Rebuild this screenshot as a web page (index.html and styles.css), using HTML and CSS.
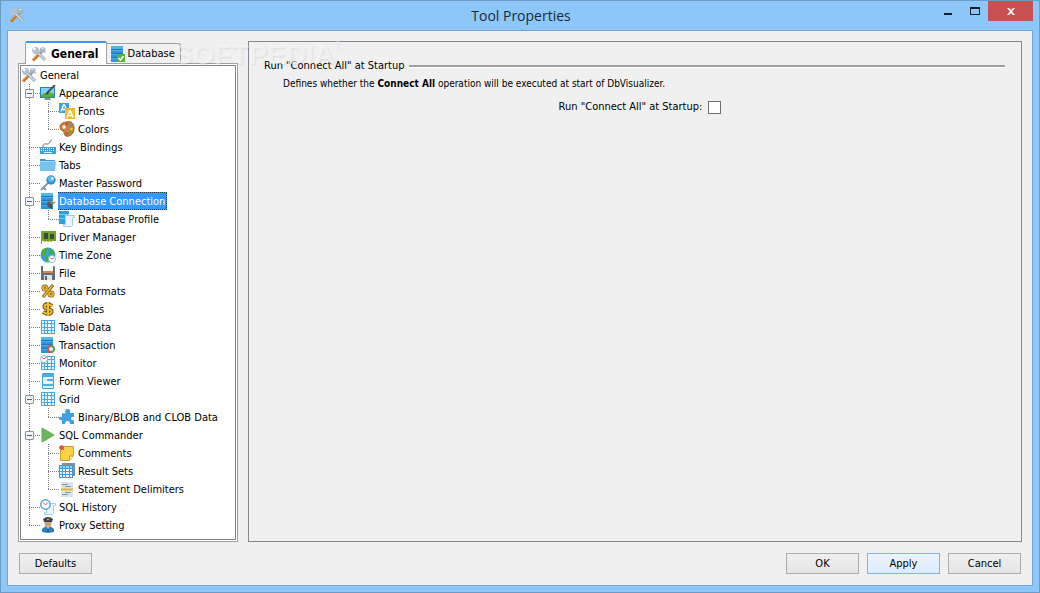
FILE: index.html
```html
<!DOCTYPE html>
<html lang="en">
<head>
    <meta charset="UTF-8">
    <meta name="viewport" content="width=device-width, initial-scale=1.0">
    <title>Tool Properties</title>
    <link rel="stylesheet" href="styles.css">
</head>
<body>
    <!-- Shared icons -->
    <svg class="icon-defs" aria-hidden="true">
        <symbol id="tools" viewBox="0 0 16 16">
            <path d="M2 14.500 8 8" stroke="#c9731c" stroke-width="3"/>
            <path d="M2 13.500 7 8" stroke="#f0a952" stroke-width="1"/>
            <path d="M7.500 9 12 4.500M5 5l9 9" stroke="#8f9dac" stroke-width="3"/>
            <path d="M5 5l9 9" stroke="#d3dce6" stroke-width="1.500"/>
            <path d="M1 2 3.500 4.500 5 3 3 1h3l2 2v3L6 8H3L1 5z" fill="#b4c0cc"/>
            <path d="M9 2l4-1 2 2-1 1 1 2-1 1-2-2-2 2-2-2 1-1z" fill="#a8b5c2"/>
            <path d="M10 3l3-1" stroke="#e1e8ee"/>
        </symbol>
        <symbol id="db" viewBox="0 0 16 16">
            <path d="M1 0h12v16H1z" fill="#2b95db"/>
            <path d="M1 0h12v3H1z" fill="#4db6f0"/>
            <path d="M1 3.500h12M1 7.500h12M1 11.500h12" stroke="#1b78b8"/>
            <path d="M1 4.500h12M1 8.500h12M1 12.500h12" stroke="#4db0ea"/>
        </symbol>
        <symbol id="table" viewBox="0 0 16 16">
            <path d="M1 1h14v14H1z" fill="#e9f6fe"/>
            <path d="M1.500 1v14M4.500 1v14M7.500 1v14M11.500 1v14M14.500 1v14M1 1.500h14M1 4.500h14M1 8.500h14M1 11.500h14M1 14.500h14" stroke="#4aa9e3"/>
        </symbol>
        <symbol id="page" viewBox="0 0 16 16">
            <path d="M6.500 4.500h9v2h-2v8l-1 1h-8v-2h2z" fill="#eaf5fc" stroke="#a6cde6"/>
        </symbol>
    </svg>

    <div class="window">
        <header class="titlebar">
            <svg class="icon title-icon"><use href="#tools"/></svg>
            <h1 class="title">Tool Properties</h1>
            <div class="window-controls">
                <button class="control" aria-label="Minimize"><svg width="8" height="11"><path d="M0 9h8v2H0z" fill="#1e1e1e"/></svg></button>
                <button class="control" aria-label="Maximize"><svg width="10" height="8"><path d="M0 0h10v8H0zM1 2v5h8V2z" fill="#1e1e1e" fill-rule="evenodd"/></svg></button>
                <button class="control close" aria-label="Close"><svg width="8" height="7"><path d="M0 0h2l2 2 2-2h2L5 3.500 8 7H6L4 5 2 7H0l3-3.500z" fill="#fff"/></svg></button>
            </div>
        </header>

        <div class="client">
            <main class="columns">
                <section class="sidebar">
                    <div class="tabs" role="tablist">
                        <button class="tab active" role="tab" aria-selected="true"><svg class="icon"><use href="#tools"/></svg>General</button>
                        <button class="tab" role="tab" aria-selected="false">
                            <svg class="icon" viewBox="0 0 16 16"><use href="#db"/><path d="M7 8h8v8H7z" fill="#55b531"/><path d="M8.500 12l2 2 3-4" stroke="#fff" stroke-width="1.500" fill="none"/></svg>Database
                        </button>
                    </div>
                    <nav class="tree-frame">
                        <div class="tree">
                            <a class="row" href="#"><svg class="icon"><use href="#tools"/></svg><span class="label">General</span></a>
                            <ul class="branch">
                                <li>
                                    <div class="parent">
                                        <button class="toggle" aria-expanded="true" aria-label="Collapse Appearance"></button>
                                        <a class="row" href="#">
                                            <svg class="icon" viewBox="0 0 16 16"><path d="M0 2h15v11H0z" fill="#2581be"/><path d="M1 3h13v9H1z" fill="#7fd0f5"/><path d="M1 10q6-5 13-1v3H1z" fill="#52b43a"/><path d="M5 13h5l1 2H4z" fill="#8a9199"/><path d="M15 0 8 7" stroke="#4f5358" stroke-width="2"/><path d="M8 6 5 10l3-1 1-2z" fill="#30343a"/></svg>
                                            <span class="label">Appearance</span>
                                        </a>
                                    </div>
                                    <ul class="branch">
                                        <li><a class="row" href="#">
                                            <svg class="icon" viewBox="0 0 16 16"><path d="M0 0h10v10H0z" fill="#36a5e6"/><path d="M2 8.500 4.500 2h1L8 8.500M3 6.500h4" stroke="#fff" stroke-width="1.300" fill="none"/><path d="M6 5h10v11H6z" fill="#f3bd20"/><path d="M8 14.500 10.500 8h1l2.500 6.500M9 12.500h4" stroke="#fff" stroke-width="1.500" fill="none"/></svg>
                                            <span class="label">Fonts</span></a></li>
                                        <li><a class="row" href="#">
                                            <svg class="icon" viewBox="0 0 16 16"><path d="M8 1c4-1 7 1 7 6 0 6-4 9-8 8-3-1-1-4-3-5C1 9 1 7 1 5c1-3 4-4 7-4z" fill="#c98141" stroke="#9d5b25"/><circle cx="5" cy="6" r="1.700" fill="#fff"/><circle cx="8" cy="3" r="1.300" fill="#e94536"/><circle cx="12" cy="4" r="1.300" fill="#3b9de0"/><circle cx="12.500" cy="8" r="1.300" fill="#f4cf2b"/><circle cx="11" cy="11" r="1.300" fill="#50b444"/><circle cx="8" cy="12.500" r="1.300" fill="#d9432f"/></svg>
                                            <span class="label">Colors</span></a></li>
                                    </ul>
                                </li>
                                <li><a class="row" href="#">
                                    <svg class="icon" viewBox="0 0 16 16"><path d="M3 8q0-4 3-3t4-2q0-2 2-2" fill="none" stroke="#72787e"/><path d="M0 8h16v7H0z" fill="#3b9fdc"/><path d="M1 9.500h14M1 11.500h14" stroke="#fff" stroke-dasharray="1 1"/><path d="M4 13.500h8" stroke="#e8f6ff"/></svg>
                                    <span class="label">Key Bindings</span></a></li>
                                <li><a class="row" href="#">
                                    <svg class="icon" viewBox="0 0 16 16"><path d="M0 2h5l1 1h9v11H0z" fill="#3498d8"/><path d="M0 4h16l-1 10H0z" fill="#76c2f0"/><path d="M0 4.500h16" stroke="#a5dafa"/></svg>
                                    <span class="label">Tabs</span></a></li>
                                <li><a class="row" href="#">
                                    <svg class="icon" viewBox="0 0 16 16"><path d="M1 15 9 7M3 12l3 3" stroke="#8998a7" stroke-width="2"/><circle cx="11" cy="5" r="4.700" fill="#2e91d3"/><circle cx="11" cy="4" r="3" fill="#60b8ec"/><circle cx="12.500" cy="3.500" r="1.200" fill="#fff"/></svg>
                                    <span class="label">Master Password</span></a></li>
                                <li>
                                    <div class="parent">
                                        <button class="toggle" aria-expanded="true" aria-label="Collapse Database Connection"></button>
                                        <a class="row selected" href="#" aria-current="true">
                                            <svg class="icon" viewBox="0 0 16 16"><use href="#db"/><path d="M8 8l5 5-2 2q-3 0-4-3z" fill="#59534e"/><path d="M10 9l3-2M12 11l3-2" stroke="#b07846" stroke-width="1.500"/><path d="M10 14q2 1 3 2" stroke="#44403d"/></svg>
                                            <span class="label">Database Connection</span>
                                        </a>
                                    </div>
                                    <ul class="branch">
                                        <li><a class="row" href="#">
                                            <svg class="icon" viewBox="0 0 16 16"><path d="M0 0h10v13H0z" fill="#2e9fe2"/><path d="M0 3.500h10M0 7.500h10" stroke="#79cbf4"/><use href="#page"/></svg>
                                            <span class="label">Database Profile</span></a></li>
                                    </ul>
                                </li>
                                <li><a class="row" href="#">
                                    <svg class="icon" viewBox="0 0 16 16"><path d="M1.500 2v13" stroke="#8d9396"/><path d="M2 2h14v10H2z" fill="#6ca32b"/><path d="M4 4h4v6H4zM10 5h4v5h-4z" fill="#3d4a35"/><path d="M4 12.500h9" stroke="#d3af35" stroke-dasharray="2 1"/></svg>
                                    <span class="label">Driver Manager</span></a></li>
                                <li><a class="row" href="#">
                                    <svg class="icon" viewBox="0 0 16 16"><circle cx="8" cy="8" r="7.500" fill="#32a1dc"/><path d="M2 3q4-3 6-2L7 4 5 5l1 2-2 3-3-2zM9 2l4 1 2 4-3 1-3-2zM5 9l4 1v5l-3-1z" fill="#4dae36"/><circle cx="12" cy="12" r="3.500" fill="#fff" stroke="#91b7cc"/><path d="M10.500 11 12 12l2-1" stroke="#df4c43" fill="none"/></svg>
                                    <span class="label">Time Zone</span></a></li>
                                <li><a class="row" href="#">
                                    <svg class="icon" viewBox="0 0 16 16"><path d="M1 1h13l1 1v13H1z" fill="#5d6f80"/><path d="M3 1h10v7H3z" fill="#fff"/><path d="M3 6h10v2H3z" fill="#ef8127"/><path d="M4 10h8v5H4z" fill="#dce5ec"/><path d="M5 11h2v4H5z" fill="#536373"/></svg>
                                    <span class="label">File</span></a></li>
                                <li><a class="row" href="#">
                                    <svg class="icon" viewBox="0 0 16 16" fill="none"><g stroke="#6b5320" stroke-width="3"><circle cx="5" cy="5" r="2"/><circle cx="11" cy="11" r="2"/><path d="M13 2 3 14"/></g><g stroke="#f1bb2a" stroke-width="1.700"><circle cx="5" cy="5" r="2"/><circle cx="11" cy="11" r="2"/><path d="M12.500 2.500l-9 11"/></g></svg>
                                    <span class="label">Data Formats</span></a></li>
                                <li><a class="row" href="#">
                                    <svg class="icon" viewBox="0 0 16 16" fill="none"><path d="M12 5q-4-3-7-1-2 3 3 4 5 1 3 4-3 2-8-1M8 1v14" stroke="#6b5320" stroke-width="4"/><path d="M12 5q-4-3-7-1-2 3 3 4 5 1 3 4-3 2-8-1M8 1v14" stroke="#f4bd27" stroke-width="2"/></svg>
                                    <span class="label">Variables</span></a></li>
                                <li><a class="row" href="#"><svg class="icon"><use href="#table"/></svg><span class="label">Table Data</span></a></li>
                                <li><a class="row" href="#">
                                    <svg class="icon" viewBox="0 0 16 16"><use href="#db"/><path d="M11 9a3 3 0 0 0 0 6" stroke="#e14e42" stroke-width="2" fill="none"/><path d="M11 9a3 3 0 0 1 0 6" stroke="#50ad37" stroke-width="2" fill="none"/><circle cx="11" cy="12" r="2" fill="#e6f0f6"/></svg>
                                    <span class="label">Transaction</span></a></li>
                                <li><a class="row" href="#">
                                    <svg class="icon" viewBox="0 0 16 16"><use href="#table"/><circle cx="4" cy="4" r="3.500" fill="#fff" stroke="#85c1e5"/><path d="M2 2.500 4 4l2-2" stroke="#e44e45" fill="none"/></svg>
                                    <span class="label">Monitor</span></a></li>
                                <li><a class="row" href="#">
                                    <svg class="icon" viewBox="0 0 16 16"><path d="M2.500.5h11v15h-11z" fill="#dff3ff" stroke="#3ba0dd"/><path d="M2 1h12v3H2zM7 6h7v2H7zM2 11h12v2H2z" fill="#49b0ea"/><path d="M3 5.500h5M3 9.500h10" stroke="#fff"/></svg>
                                    <span class="label">Form Viewer</span></a></li>
                                <li>
                                    <div class="parent">
                                        <button class="toggle" aria-expanded="true" aria-label="Collapse Grid"></button>
                                        <a class="row" href="#"><svg class="icon"><use href="#table"/></svg><span class="label">Grid</span></a>
                                    </div>
                                    <ul class="branch">
                                        <li><a class="row" href="#">
                                            <svg class="icon" viewBox="0 0 16 16"><path d="M3 4h3Q5 0 8.500 0T11 4h4v4q-3-1-3 1.500t3 1.500v4h-4q0-3-2.500-3T6 15H3v-4q-3 1-3-1.500T3 8z" fill="#3d9fde"/><path d="M3.500 4.500h3Q5.500 1 8.500.700" fill="none" stroke="#79c5f0"/></svg>
                                            <span class="label">Binary/BLOB and CLOB Data</span></a></li>
                                    </ul>
                                </li>
                                <li>
                                    <div class="parent">
                                        <button class="toggle" aria-expanded="true" aria-label="Collapse SQL Commander"></button>
                                        <a class="row" href="#">
                                            <svg class="icon" viewBox="0 0 16 16"><path d="M2 1l12 7-12 7z" fill="#6cb65f" stroke="#5dab4f"/></svg>
                                            <span class="label">SQL Commander</span>
                                        </a>
                                    </div>
                                    <ul class="branch">
                                        <li><a class="row" href="#">
                                            <svg class="icon" viewBox="0 0 16 16"><path d="M1.500 1.500h13v9l-4 5h-9z" fill="#fdd04a" stroke="#d59b21"/><path d="M10.500 15v-4h4" fill="#fff0ac" stroke="#d59b21"/><circle cx="2.500" cy="2.500" r="2.300" fill="#df4b3d"/><path d="M3 3l2 2" stroke="#7e5a52"/></svg>
                                            <span class="label">Comments</span></a></li>
                                        <li><a class="row" href="#">
                                            <svg class="icon" viewBox="0 0 16 16"><path d="M3 0h13v13h-2V2H3z" fill="#7b8d9b"/><path d="M0 2h14v13H0z" fill="#edf8ff"/><path d="M0 2h14v3H0z" fill="#8ecff4"/><path d="M.5 2v13M3.500 2v13M6.500 2v13M10.500 2v13M13.500 2v13M0 2.500h14M0 5.500h14M0 8.500h14M0 11.500h14M0 14.500h14" stroke="#3b9cd9"/></svg>
                                            <span class="label">Result Sets</span></a></li>
                                        <li><a class="row" href="#">
                                            <svg class="icon" viewBox="0 0 16 16"><path d="M2 1h12v15H2z" fill="#d8e7ed"/><path d="M3 3.500h6M6 5.500h6M6 11.500h6M3 13.500h6" stroke="#85949e"/><path d="M2 8.500h12" stroke="#efb421" stroke-width="2"/></svg>
                                            <span class="label">Statement Delimiters</span></a></li>
                                    </ul>
                                </li>
                                <li><a class="row" href="#">
                                    <svg class="icon" viewBox="0 0 16 16"><use href="#page"/><circle cx="5.500" cy="5.500" r="4.700" fill="#f8fdff" stroke="#4fa9dc" stroke-width="1.500"/><path d="M3 3.500 5.500 6 8 3.500" stroke="#d95b58" fill="none"/></svg>
                                    <span class="label">SQL History</span></a></li>
                                <li><a class="row" href="#">
                                    <svg class="icon" viewBox="0 0 16 16"><path d="M2 15v-3l4-3h4l4 3v3l-6 1z" fill="#277fbc"/><circle cx="8" cy="6" r="3.500" fill="#dc9b65"/><path d="M3 2q5-4 10 0l-1 3H4z" fill="#3b4653"/><path d="M7 2.500h2" stroke="#e9bd3e"/><path d="M6 9l2 3 2-3z" fill="#edbd88"/><path d="M8 12v3" stroke="#174e77"/></svg>
                                    <span class="label">Proxy Setting</span></a></li>
                            </ul>
                        </div>
                    </nav>
                </section>

                <section class="settings">
                    <h2 class="group-title">Run "Connect All" at Startup</h2>
                    <div class="group-body">
                        <p class="description">Defines whether the <b>Connect All</b> operation will be executed at start of DbVisualizer.</p>
                        <div class="field">
                            <label for="connect-all">Run "Connect All" at Startup:</label>
                            <input type="checkbox" id="connect-all" class="checkbox">
                        </div>
                    </div>
                </section>
                <div class="watermark" aria-hidden="true">SOFTPEDIA<sup>®</sup></div>
            </main>

            <footer class="actions">
                <button class="button defaults">Defaults</button>
                <button class="button">OK</button>
                <button class="button primary">Apply</button>
                <button class="button">Cancel</button>
            </footer>
        </div>
    </div>
</body>
</html>
```
FILE: styles.css
```css
* {
    box-sizing: border-box;
}

body {
    margin: 0;
    font-family: "DejaVu Sans Condensed", Tahoma, "DejaVu Sans", sans-serif;
    font-size: 11px;
    line-height: 14px;
    color: #000;
}

button {
    font: inherit;
    color: inherit;
    padding: 0;
}

.icon-defs {
    display: none;
}

.icon {
    width: 16px;
    height: 16px;
    flex: none;
}

/* --- Window frame --- */
.window {
    display: flex;
    flex-direction: column;
    min-height: 100vh;
    background: #8dc7fa;
    border: 1px solid #6c9bc5;
}

.titlebar {
    display: grid;
    grid-template-columns: 1fr auto 1fr;
    height: 29px;
    padding: 0 6px 0 8px;
}

.title-icon {
    margin-top: 6px;
}

.title {
    margin: 0;
    font: 14px/29px "Open Sans", "Noto Sans", sans-serif;
    color: #1c2a38;
}

.window-controls {
    display: flex;
    justify-content: flex-end;
}

.control {
    display: flex;
    justify-content: center;
    width: 27px;
    height: 20px;
    padding-top: 6px;
    border: none;
    background: none;
}

.control:first-child {
    padding-top: 3px;
}

.control.close {
    width: 45px;
    padding-top: 7px;
    background: #c75050;
}

.client {
    display: flex;
    flex-direction: column;
    flex: 1;
    gap: 11px;
    margin: 0 6px 6px;
    padding: 10px 10px 11px;
    background: #f0f0f0;
    border: 1px solid #70a5d4;
}

.columns {
    display: flex;
    flex: 1;
    gap: 10px;
    position: relative;
}

/* --- Tabs --- */
.sidebar {
    display: flex;
    flex-direction: column;
    width: 220px;
}

.tabs {
    display: flex;
    align-items: flex-end;
    padding-left: 7px;
}

.tab {
    display: flex;
    align-items: center;
    gap: 2px;
    height: 20px;
    padding: 0 5px 0 3px;
    background: #f0f0f0;
    border: 1px solid #a0a0a0;
    border-width: 1px 1px 0 0;
    border-radius: 0 3px 0 0;
}

.tab.active {
    gap: 4px;
    height: 23px;
    margin-bottom: -1px;
    padding: 0 7px 0 5px;
    font-size: 12px;
    font-weight: bold;
    background: #fff;
    border-width: 2px 1px 0;
    border-top-color: #3399ff;
    border-radius: 2px 2px 0 0;
    z-index: 1;
}

/* --- Tree --- */
.tree-frame {
    display: flex;
    flex: 1;
    padding: 1px;
    background: #fff;
    border: 1px solid #a0a0a0;
}

.tree {
    flex: 1;
    border: 1px solid #828790;
}

.branch {
    list-style: none;
    margin: 0;
    padding: 0;
}

/* dotted guide lines: vertical trunk and horizontal stub */
.branch > li {
    padding-left: 19px;
    background-image:
        repeating-linear-gradient(#808080 0 1px, transparent 1px 2px),
        repeating-linear-gradient(90deg, #808080 0 1px, transparent 1px 2px);
    background-position: 8px 0, 8px 9px;
    background-size: 1px 100%, 11px 1px;
    background-repeat: no-repeat;
}

.branch > li:last-child {
    background-size: 1px 10px, 11px 1px;
}

.parent {
    display: flex;
    align-items: center;
}

.toggle {
    width: 9px;
    height: 9px;
    margin: 0 6px 0 -15px;
    border: 1px solid #919191;
    border-radius: 1px;
    background: linear-gradient(#4b63a7, #4b63a7) center / 5px 1px no-repeat, #f4f4f4;
}

.row {
    display: flex;
    align-items: center;
    height: 18px;
    gap: 2px;
    color: #000;
    text-decoration: none;
    white-space: nowrap;
}

.label {
    height: 18px;
    padding: 2px 1px 0;
    border: 1px solid transparent;
    border-left: none;
}

.selected .label {
    color: #fff;
    background: #3399ff;
    border: 1px dotted #24415e;
    border-left: none;
}

/* --- Settings panel --- */
.settings {
    flex: 1;
    padding: 17px 16px 16px 15px;
    border: 1px solid #828790;
}

.group-title {
    display: flex;
    align-items: center;
    gap: 5px;
    margin: 0;
    font-size: 11px;
    font-weight: normal;
}

.group-title::after {
    content: "";
    flex: 1;
    height: 2px;
    background: #a0a0a0;
    border-bottom: 1px solid #fff;
}

.group-body {
    padding-left: 19px;
}

.description {
    margin: 4px 0 9px;
    font-size: 10px;
}

.field {
    display: flex;
    align-items: center;
    justify-content: center;
    gap: 6px;
    padding-right: 8px;
}

.checkbox {
    appearance: none;
    width: 13px;
    height: 13px;
    margin: 0;
    background: #fff;
    border: 1px solid #707070;
}

.checkbox:checked {
    background: #3399ff;
}

/* --- Watermark --- */
.watermark {
    position: absolute;
    top: 0;
    left: 156px;
    font: bold 28px/28px "Liberation Sans", Arial, sans-serif;
    color: rgba(255, 255, 255, 0.5);
    text-shadow: 1px 1px 2px rgba(0, 0, 0, 0.08);
    pointer-events: none;
}

.watermark sup {
    font-size: 10px;
    line-height: 10px;
    vertical-align: top;
}

/* --- Footer --- */
.actions {
    display: flex;
    gap: 8px;
    padding: 0 1px;
}

.button {
    width: 73px;
    height: 21px;
    background: linear-gradient(#f0f0f0, #e5e5e5);
    border: 1px solid #acacac;
}

.button.defaults {
    margin-right: auto;
}

.button.primary {
    background: linear-gradient(#ecf4fc, #dcecfc);
    border-color: #7eb4ea;
}
```
